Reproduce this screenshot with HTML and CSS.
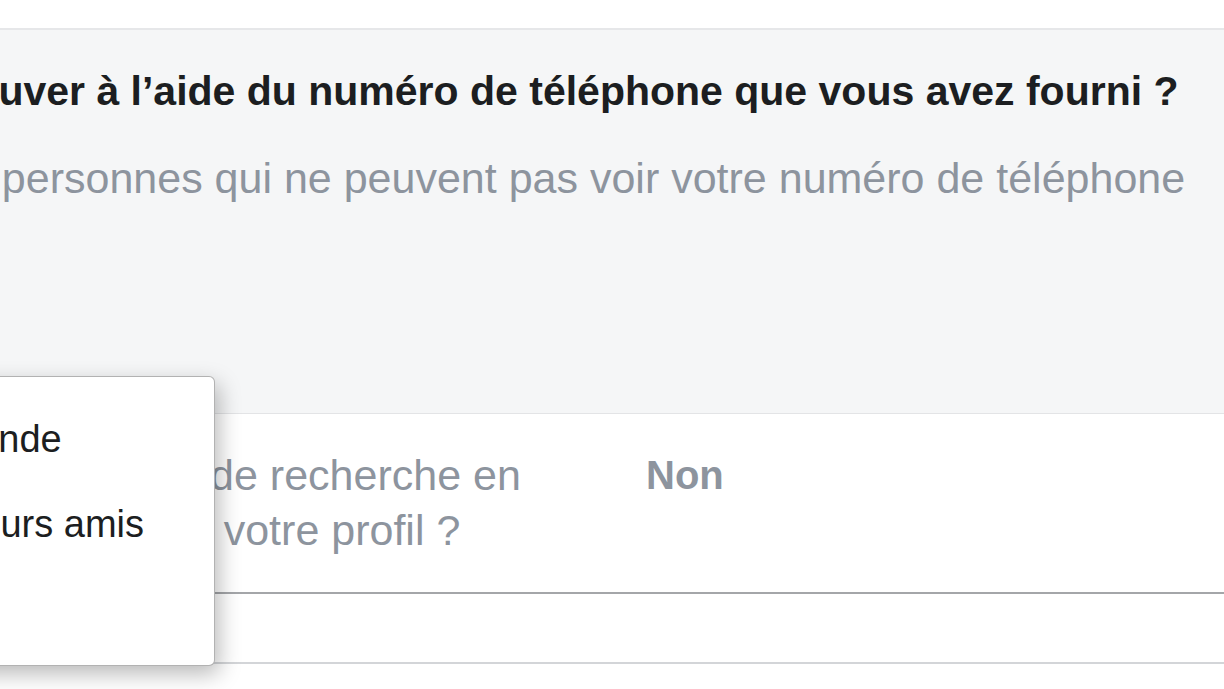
FILE: index.html
```html
<!DOCTYPE html>
<html lang="fr">
<head>
<meta charset="utf-8">
<title>Paramètres de confidentialité</title>
<link rel="stylesheet" href="styles.css">
</head>
<body>
<div class="page">
  <div class="topbar"></div>
  <section class="expanded">
    <h2 class="question">Qui peut vous trouver à l’aide du numéro de téléphone que vous avez fourni ?</h2>
    <p class="hint">Ceci s’applique aux personnes qui ne peuvent pas voir votre numéro de téléphone</p>
  </section>
  <div class="row">
    <div class="label">Voulez-vous que les moteurs de recherche en dehors de Facebook affichent votre profil ?</div>
    <div class="value">Non</div>
  </div>
  <div class="row-empty"></div>
  <ul class="menu">
    <li class="menu-item">Tout le monde</li>
    <li class="menu-item">Amis de leurs amis</li>
    <li class="menu-item">Amis</li>
  </ul>
</div>
</body>
</html>
```

FILE: styles.css
```css
html, body {
  margin: 0;
  padding: 0;
  background: #ffffff;
  overflow: hidden;
}

body {
  width: 1224px;
  height: 689px;
  font-family: "Liberation Sans", Arial, sans-serif;
}

.page {
  position: relative;
  width: 1224px;
  height: 689px;
}

.topbar {
  height: 28px;
  background: #ffffff;
  border-bottom: 2px solid #e6e7e9;
}

.expanded {
  background: #f5f6f7;
  height: 347px;
  padding-top: 36px;
  border-bottom: 1px solid #e3e4e6;
  white-space: nowrap;
}

.question {
  margin: 0 0 0 -341px;
  font-size: 41px;
  line-height: 50px;
  font-weight: 700;
  color: #1c1e21;
}

.hint {
  margin: 34px 0 0 -383px;
  font-size: 43px;
  line-height: 56px;
  color: #8d949e;
}

.row {
  display: grid;
  grid-template-columns: 900px auto;
  column-gap: 100px;
  margin-left: -354px;
  padding: 34px 0 34px;
  border-bottom: 2px solid #a4a6a9;
}

.label {
  font-size: 43px;
  line-height: 55px;
  color: #8d949e;
}

.value {
  font-size: 40px;
  line-height: 55px;
  font-weight: 700;
  color: #8d949e;
}

.row-empty {
  height: 68px;
  border-bottom: 2px solid #d3d5d8;
}

.menu {
  position: absolute;
  left: -240px;
  top: 376px;
  width: 455px;
  height: 290px;
  box-sizing: border-box;
  margin: 0;
  padding: 20px 0 0 62px;
  list-style: none;
  background: #ffffff;
  border: 1px solid rgba(0, 0, 0, 0.3);
  border-radius: 6px;
  box-shadow: 4px 8px 22px rgba(0, 0, 0, 0.28);
}

.menu-item {
  font-size: 38px;
  line-height: 85px;
  color: #1c1e21;
  white-space: nowrap;
}
```
